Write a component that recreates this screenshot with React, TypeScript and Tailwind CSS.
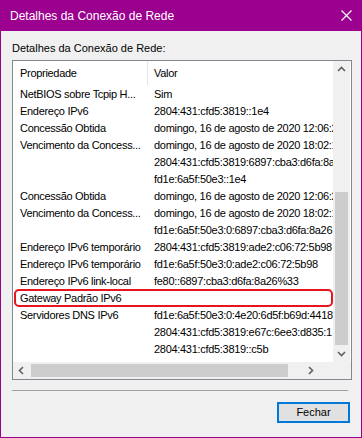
const rows: [string, string][] = [
  ["NetBIOS sobre Tcpip H...", "Sim"],
  ["Endereço IPv6", "2804:431:cfd5:3819::1e4"],
  ["Concessão Obtida", "domingo, 16 de agosto de 2020 12:06:26"],
  ["Vencimento da Concess...", "domingo, 16 de agosto de 2020 18:02:14"],
  ["", "2804:431:cfd5:3819:6897:cba3:d6fa:8a26"],
  ["", "fd1e:6a5f:50e3::1e4"],
  ["Concessão Obtida", "domingo, 16 de agosto de 2020 12:06:26"],
  ["Vencimento da Concess...", "domingo, 16 de agosto de 2020 18:02:14"],
  ["", "fd1e:6a5f:50e3:0:6897:cba3:d6fa:8a26"],
  ["Endereço IPv6 temporário", "2804:431:cfd5:3819:ade2:c06:72:5b98"],
  ["Endereço IPv6 temporário", "fd1e:6a5f:50e3:0:ade2:c06:72:5b98"],
  ["Endereço IPv6 link-local", "fe80::6897:cba3:d6fa:8a26%33"],
  ["Gateway Padrão IPv6", ""],
  ["Servidores DNS IPv6", "fd1e:6a5f:50e3:0:4e20:6d5f:b69d:4418"],
  ["", "2804:431:cfd5:3819:e67c:6ee3:d835:1"],
  ["", "2804:431:cfd5:3819::c5b"],
];

function Chevron({ dir }: { dir: "up" | "down" | "left" | "right" }) {
  const pts = {
    up: "1,6 4.5,2.5 8,6",
    down: "1,3 4.5,6.5 8,3",
    left: "6,1 2.5,4.5 6,8",
    right: "3,1 6.5,4.5 3,8",
  }[dir];
  return (
    <svg width="9" height="9" viewBox="0 0 9 9">
      <polyline points={pts} fill="none" stroke="#606060" strokeWidth="1.6" />
    </svg>
  );
}

export default function App() {
  return (
    <div
      className="w-[362px] h-[438px] flex flex-col border border-t-0 border-[#9b008f] bg-[#f0f0f0] text-black text-[11px]"
      style={{ fontFamily: '"Liberation Sans", Arial, sans-serif' }}
    >
      <div className="h-[31px] -mx-px bg-[#9b008f] flex items-center justify-between pl-[10px] pr-[10px] text-white text-[12px]">
        <span>Detalhes da Conexão de Rede</span>
        <svg width="11" height="11" viewBox="0 0 11 11">
          <path d="M0.5 0.5 L10.5 10.5 M10.5 0.5 L0.5 10.5" stroke="white" strokeWidth="1.2" />
        </svg>
      </div>

      <div className="flex-1 flex flex-col px-[11px]">
        <div className="mt-[10px] leading-[15px] h-[15px]">Detalhes da Conexão de Rede:</div>

        <div className="mt-[4px] w-[340px] h-[320px] border border-[#828790] bg-white flex flex-col">
          <div className="flex h-[301px]">
            <div className="relative w-[320px] shrink-0 overflow-hidden tracking-[-0.3px]">
              <div className="flex h-[25px] items-center">
                <div className="w-[134px] shrink-0 pl-[7px]">Propriedade</div>
                <div className="w-px h-[24px] shrink-0 self-start bg-[#e5e5e5]" />
                <div className="pl-[6px]">Valor</div>
              </div>
              {rows.map(([k, v], i) => (
                <div key={i} className="flex h-[17px] items-center whitespace-nowrap">
                  <div className="w-[135px] shrink-0 pl-[7px] overflow-hidden">{k}</div>
                  <div className="flex-1 min-w-0 pl-[6px] overflow-hidden">{v}</div>
                </div>
              ))}
              <div className="absolute left-px top-[228px] w-[319px] h-[18px] border-2 border-[#e8141e] rounded-[5px]" />
            </div>
            <div className="w-[17px] bg-[#f0f0f0] flex flex-col items-center">
              <div className="h-[17px] flex items-center justify-center">
                <Chevron dir="up" />
              </div>
              <div className="flex-1 w-full flex flex-col px-[2px]">
                <div className="h-[114px]" />
                <div className="h-[153px] bg-[#cdcdcd]" />
              </div>
              <div className="h-[17px] flex items-center justify-center">
                <Chevron dir="down" />
              </div>
            </div>
          </div>
          <div className="flex h-[17px] bg-[#f0f0f0]">
            <div className="w-[320px] flex items-center">
              <div className="w-[17px] flex justify-center">
                <Chevron dir="left" />
              </div>
              <div className="h-[13px] w-[257px] bg-[#cdcdcd] ml-px" />
              <div className="flex-1 flex justify-center">
                <Chevron dir="right" />
              </div>
            </div>
            <div className="w-[17px]" />
          </div>
        </div>

        <div className="mt-[10px] w-[336px] h-px bg-[#a0a0a0]" />

        <div className="mt-[11px] flex justify-end">
          <button className="w-[73px] h-[21px] bg-[#e1e1e1] border-2 border-[#0078d7] text-[11px] leading-none">
            Fechar
          </button>
        </div>
      </div>
    </div>
  );
}
